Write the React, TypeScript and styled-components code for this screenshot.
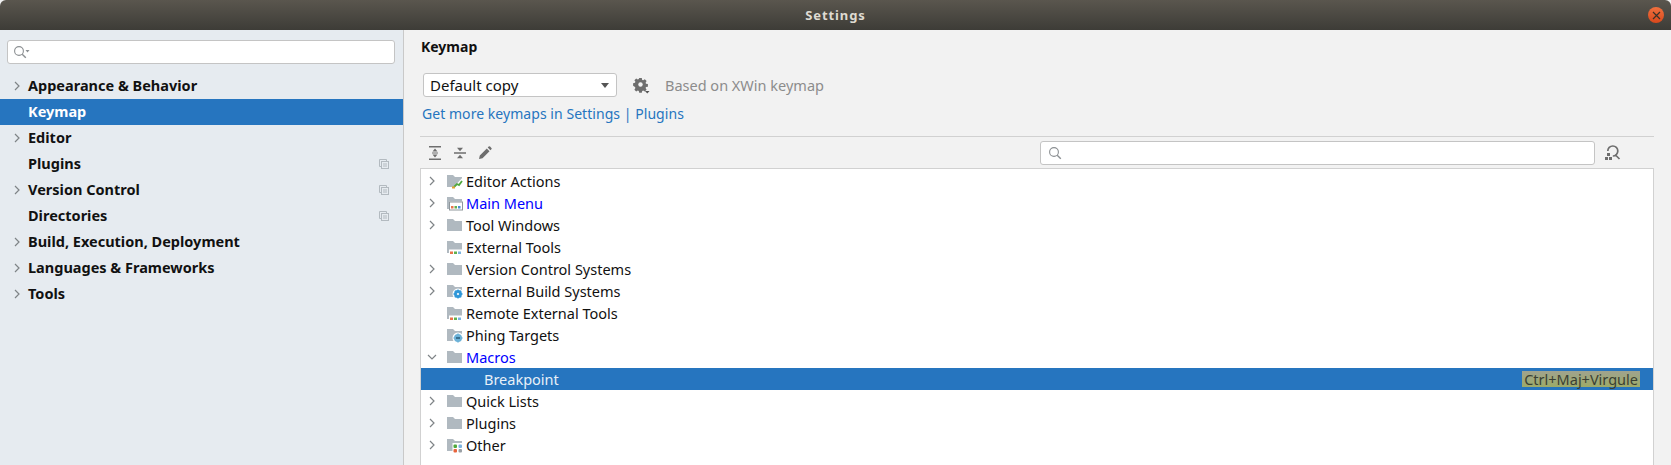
import { FC } from "react";
import styled, { createGlobalStyle } from "styled-components";

type Badge = "chart" | "menu" | "tools" | "gear" | "phing" | "other";

const sideItems = [
  { label: "Appearance & Behavior", arrow: true },
  { label: "Keymap", selected: true },
  { label: "Editor", arrow: true },
  { label: "Plugins", copy: true },
  { label: "Version Control", arrow: true, copy: true },
  { label: "Directories", copy: true },
  { label: "Build, Execution, Deployment", arrow: true },
  { label: "Languages & Frameworks", arrow: true },
  { label: "Tools", arrow: true },
];

const treeItems: {
  label: string;
  arrow?: "right" | "down";
  badge?: Badge;
  blue?: boolean;
}[] = [
  { label: "Editor Actions", arrow: "right", badge: "chart" },
  { label: "Main Menu", arrow: "right", badge: "menu", blue: true },
  { label: "Tool Windows", arrow: "right" },
  { label: "External Tools", badge: "tools" },
  { label: "Version Control Systems", arrow: "right" },
  { label: "External Build Systems", arrow: "right", badge: "gear" },
  { label: "Remote External Tools", badge: "tools" },
  { label: "Phing Targets", badge: "phing" },
  { label: "Macros", arrow: "down", blue: true },
];

const lowerItems: typeof treeItems = [
  { label: "Quick Lists", arrow: "right" },
  { label: "Plugins", arrow: "right" },
  { label: "Other", arrow: "right", badge: "other" },
];

const Arrow: FC<{ down?: boolean }> = ({ down }) => (
  <svg width="10" height="10" viewBox="0 0 10 10" fill="none" stroke="#7f8487" strokeWidth="1.2">
    <path d={down ? "M1 3l4 4 4-4" : "M3 1l4 4-4 4"} />
  </svg>
);

const SearchGlyph: FC<{ caret?: boolean }> = ({ caret }) => (
  <svg width="18" height="14" viewBox="0 0 18 14" fill="none" stroke="#8b8f92" strokeWidth="1.1">
    <circle cx="6" cy="6" r="4.4" />
    <path d="M9.2 9.2l3.6 3.6" strokeWidth="1.4" />
    {caret && <path d="M12.5 5h4l-2 2.5z" fill="#8b8f92" stroke="none" />}
  </svg>
);

const CopyGlyph = () => (
  <svg width="10" height="10" viewBox="0 0 10 10" fill="none" stroke="#b3bac0" strokeWidth="1">
    <path d="M2.5 7.5h-2v-7h7v2" />
    <rect x="2.5" y="2.5" width="7" height="7" />
    <path d="M4 5h4M4 7h4" />
  </svg>
);

const ColorDots = () => (
  <>
    <rect x="3" y="10.500" width="14" height="5" fill="#fff" />
    <rect x="4" y="12.500" width="3" height="2.500" fill="#e8734a" />
    <rect x="8" y="12.500" width="3" height="2.500" fill="#62b04e" />
    <rect x="12" y="12.500" width="3" height="2.500" fill="#7cb4e0" />
  </>
);

const BadgeGlyph: FC<{ badge: Badge }> = ({ badge }) => {
  switch (badge) {
    case "chart":
      return (
        <>
          <path d="M17 4v12H6z" fill="#fff" />
          <path d="M8 14l3-3 2 1 3-4" stroke="#4fa83d" strokeWidth="1.8" fill="none" />
          <rect x="6" y="13.500" width="3" height="2" fill="#e0a030" />
        </>
      );
    case "menu":
      return (
        <>
          <rect x="3" y="6.500" width="14" height="9" fill="#fff" />
          <rect x="3.500" y="7" width="13" height="8" fill="none" stroke="#8f979c" />
          <rect x="5" y="11" width="2.500" height="2.500" fill="#e8734a" />
          <rect x="8.500" y="11" width="2.500" height="2.500" fill="#62b04e" />
          <rect x="12" y="11" width="2.500" height="2.500" fill="#4a90d0" />
        </>
      );
    case "tools":
      return <ColorDots />;
    case "gear":
      return (
        <>
          <circle cx="12" cy="11" r="5.500" fill="#fff" />
          <circle cx="12" cy="11" r="2.800" fill="none" stroke="#2f97d8" strokeWidth="2.200" />
          <path d="M12 6.500v9M7.500 11h9M8.800 7.800l6.400 6.400M15.200 7.800l-6.400 6.400" stroke="#2f97d8" strokeWidth="1.300" />
          <circle cx="12" cy="11" r="1.100" fill="#fff" />
        </>
      );
    case "phing":
      return (
        <>
          <circle cx="12" cy="11" r="5.500" fill="#fff" />
          <circle cx="12" cy="11" r="4" fill="#6cb2d8" />
          <path d="M12 6.500v9M7.500 11h9" stroke="#6cb2d8" strokeWidth="1.500" />
          <path d="M10 11h4" stroke="#2e5f7d" strokeWidth="1.600" />
        </>
      );
    case "other":
      return (
        <>
          <rect x="6.500" y="6" width="10.500" height="10" fill="#fff" />
          <rect x="7.500" y="7.500" width="3.500" height="3.500" rx="1" fill="#4fa83d" />
          <rect x="12.500" y="7.500" width="3.500" height="3.500" rx="1" fill="#7cb4e0" />
          <rect x="7.500" y="12" width="3.500" height="3.500" rx="1" fill="#e8643c" />
          <rect x="12.500" y="12" width="3.500" height="3.500" rx="1" fill="#9aa0a5" />
        </>
      );
  }
};

const Folder: FC<{ badge?: Badge }> = ({ badge }) => (
  <svg width="18" height="16" viewBox="0 0 18 16">
    <path d="M1 2h6l2 2h7v10H1z" fill="#b0b9c0" />
    {badge && <BadgeGlyph badge={badge} />}
  </svg>
);

const TreeRow: FC<(typeof treeItems)[number]> = ({ label, arrow, badge, blue }) => (
  <Row>
    <ArrowSlot>{arrow && <Arrow down={arrow === "down"} />}</ArrowSlot>
    <Folder badge={badge} />
    <RowLabel $blue={blue}>{label}</RowLabel>
  </Row>
);

export default function App() {
  return (
    <Window>
      <GlobalStyle />
      <TitleBar>
        Settings
        <CloseButton>
          <svg width="9" height="9" viewBox="0 0 9 9" stroke="#3a3228" strokeWidth="1.2">
            <path d="M1 1l7 7M8 1l-7 7" />
          </svg>
        </CloseButton>
      </TitleBar>
      <Body>
        <Sidebar>
          <SideSearch>
            <SearchGlyph caret />
          </SideSearch>
          <SideList>
            {sideItems.map((item) => (
              <SideItem key={item.label} $selected={item.selected}>
                <SideArrow>{item.arrow && <Arrow />}</SideArrow>
                <SideLabel>{item.label}</SideLabel>
                {item.copy && <CopyGlyph />}
              </SideItem>
            ))}
          </SideList>
        </Sidebar>
        <Content>
          <Heading>Keymap</Heading>
          <SchemeRow>
            <SchemeSelect>
              Default copy
              <SelectCaret />
            </SchemeSelect>
            <svg width="17" height="17" viewBox="0 0 17 17">
              <path
                d="M6.200 1h2.600l.4 1.900 1 .4 1.600-1 1.800 1.800-1 1.600.4 1 1.900.4v2.600l-1.900.4-.4 1 1 1.600-1.800 1.800-1.600-1-1 .4-.4 1.900H6.200l-.4-1.900-1-.4-1.600 1-1.800-1.800 1-1.600-.4-1L.1 8.800V6.200l1.900-.4.4-1-1-1.600 1.800-1.800 1.600 1 1-.4z"
                fill="#6e6e6e"
              />
              <circle cx="7.500" cy="7.500" r="2.200" fill="#f2f2f2" />
              <path d="M12 14h4.500l-2.250 2.500z" fill="#555" />
            </svg>
            <BasedOn>Based on XWin keymap</BasedOn>
          </SchemeRow>
          <MoreLink>Get more keymaps in Settings | Plugins</MoreLink>
          <Divider />
          <Toolbar>
            <Tools>
              <svg width="14" height="14" viewBox="0 0 14 14" fill="#6e6e6e">
                <path d="M1 0h12v1.500H1zM1 12.500h12V14H1zM7 2.500l2.500 3h-5zM7 11.500l-2.500-3h5zM4 6.500h6v1H4z" />
              </svg>
              <svg width="14" height="14" viewBox="0 0 14 14" fill="#6e6e6e">
                <path d="M1 6.200h12v1.500H1zM7 5.200l-3-3.500h6zM7 8.700l3 3.500H4z" />
              </svg>
              <svg width="14" height="14" viewBox="0 0 14 14" fill="#6e6e6e">
                <path d="M1 13l.8-3.500 7-7L11.500 5.200l-7 7zM9.700 1.600l1-1a1 1 0 0 1 1.400 0l1.300 1.300a1 1 0 0 1 0 1.400l-1 1z" />
              </svg>
            </Tools>
            <FilterBox>
              <SearchGlyph />
            </FilterBox>
            <ShortcutSearch>
              <svg width="17" height="17" viewBox="0 0 17 17" fill="none" stroke="#6e6e6e" strokeWidth="1.700">
                <path d="M3.800 7a5 5 0 1 1 5 5M11 10.500l4.500 4.500" />
                <rect x="1" y="13" width="3" height="3" fill="#6e6e6e" stroke="none" />
                <rect x="5" y="13" width="3" height="3" fill="#6e6e6e" stroke="none" />
                <rect x="3" y="9" width="3" height="3" fill="#6e6e6e" stroke="none" />
              </svg>
            </ShortcutSearch>
          </Toolbar>
          <Tree>
            {treeItems.map((item) => (
              <TreeRow key={item.label} {...item} />
            ))}
            <SelectedRow>
              <span>Breakpoint</span>
              <Shortcut>Ctrl+Maj+Virgule</Shortcut>
            </SelectedRow>
            {lowerItems.map((item) => (
              <TreeRow key={item.label} {...item} />
            ))}
          </Tree>
        </Content>
      </Body>
    </Window>
  );
}

const GlobalStyle = createGlobalStyle`
  html, body {
    margin: 0;
    background: #f2f2f2;
    overflow: hidden;
  }
`;

const Window = styled.div`
  width: 1671px;
  height: 465px;
  display: flex;
  flex-direction: column;
  overflow: hidden;
  font-family: "Noto Sans", sans-serif;
  font-size: 14.5px;
  color: #111;
`;

const TitleBar = styled.div`
  position: relative;
  flex: 0 0 30px;
  display: flex;
  align-items: center;
  justify-content: center;
  background: linear-gradient(#5a564e, #3d3c37);
  border-radius: 6px 6px 0 0;
  color: #dfdbd2;
  font-size: 13px;
  font-weight: 700;
  letter-spacing: 0.9px;
`;

const CloseButton = styled.div`
  position: absolute;
  right: 7px;
  top: 7px;
  width: 16px;
  height: 16px;
  border-radius: 50%;
  background: linear-gradient(#f0703e, #d9481c);
  display: flex;
  align-items: center;
  justify-content: center;
`;

const Body = styled.div`
  flex: 1;
  display: flex;
  min-height: 0;
`;

const Sidebar = styled.div`
  flex: 0 0 403px;
  background: #e6ebf0;
  border-right: 1px solid #c9c9c9;
  padding-top: 10px;
`;

const SideSearch = styled.div`
  height: 24px;
  box-sizing: border-box;
  margin: 0 8px 0 7px;
  display: flex;
  align-items: center;
  padding-left: 5px;
  background: #fff;
  border: 1px solid #c4c4c4;
  border-radius: 3px;
`;

const SideList = styled.div`
  margin-top: 9px;
`;

const SideItem = styled.div<{ $selected?: boolean }>`
  height: 26px;
  display: flex;
  align-items: center;
  padding-right: 14px;
  font-weight: 700;
  background: ${(p) => (p.$selected ? "#2675bf" : "transparent")};
  color: ${(p) => (p.$selected ? "#fff" : "#111")};
`;

const SideArrow = styled.div`
  width: 28px;
  padding-left: 12px;
  box-sizing: border-box;
  display: flex;
  align-items: center;
`;

const SideLabel = styled.div`
  flex: 1;
  padding-bottom: 2px;
`;

const Content = styled.div`
  flex: 1;
  min-width: 0;
  padding: 0 17px 0 16px;
  background: #f2f2f2;
  display: flex;
  flex-direction: column;
`;

const Heading = styled.div`
  font-weight: 700;
  font-size: 14px;
  margin: 7px 0 0 1px;
  height: 20px;
  line-height: 20px;
`;

const SchemeRow = styled.div`
  display: flex;
  align-items: center;
  margin-top: 16px;
  margin-left: 3px;
  gap: 16px;
`;

const SchemeSelect = styled.div`
  width: 194px;
  height: 24px;
  box-sizing: border-box;
  padding: 0 7px 0 6px;
  display: flex;
  align-items: center;
  justify-content: space-between;
  font-size: 15px;
  background: #fff;
  border: 1px solid #c4c4c4;
  border-radius: 3px;
`;

const SelectCaret = styled.span`
  border-left: 4px solid transparent;
  border-right: 4px solid transparent;
  border-top: 5px solid #555;
`;

const BasedOn = styled.span`
  color: #8c8c8c;
  margin-left: -1px;
`;

const MoreLink = styled.div`
  color: #2675bf;
  font-size: 14px;
  letter-spacing: 0.05px;
  margin: 7px 0 0 2px;
  height: 20px;
  line-height: 20px;
`;

const Divider = styled.div`
  height: 1px;
  margin-top: 12px;
  background: #d1d1d1;
`;

const Toolbar = styled.div`
  height: 31px;
  display: flex;
  align-items: center;
`;

const Tools = styled.div`
  flex: 1;
  display: flex;
  align-items: center;
  gap: 11px;
  padding-left: 8px;
`;

const FilterBox = styled.div`
  width: 555px;
  height: 24px;
  box-sizing: border-box;
  padding-left: 7px;
  display: flex;
  align-items: center;
  background: #fff;
  border: 1px solid #c4c4c4;
  border-radius: 3px;
`;

const ShortcutSearch = styled.div`
  width: 59px;
  display: flex;
  justify-content: flex-start;
  padding-left: 9px;
  box-sizing: border-box;
`;

const Tree = styled.div`
  flex: 1;
  background: #fff;
  border: 1px solid #d1d1d1;
  border-bottom: none;
  padding-top: 1px;
`;

const Row = styled.div`
  height: 22px;
  display: flex;
  align-items: center;
`;

const ArrowSlot = styled.div`
  width: 25px;
  box-sizing: border-box;
  padding-left: 6px;
  display: flex;
  align-items: center;
`;

const RowLabel = styled.span<{ $blue?: boolean }>`
  margin-left: 2px;
  color: ${(p) => (p.$blue ? "#0000ff" : "#111")};
`;

const SelectedRow = styled(Row)`
  background: #2675bf;
  color: #e8f0f8;
  justify-content: space-between;
  padding: 0 13px 0 63px;
`;

const Shortcut = styled.span`
  padding: 0 2px;
  line-height: 16px;
  color: #3a3f33;
  background: linear-gradient(#a0a38e, #9dab68);
`;
